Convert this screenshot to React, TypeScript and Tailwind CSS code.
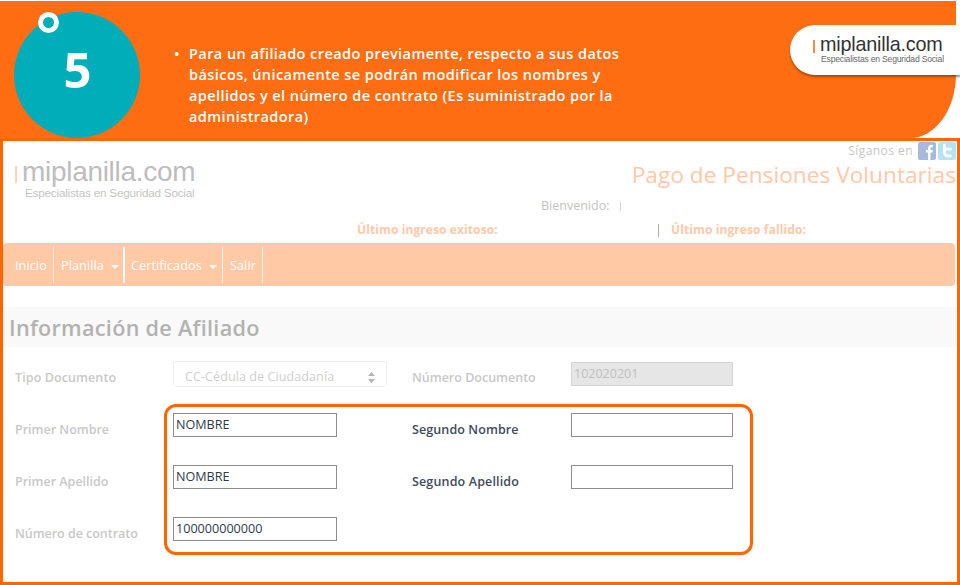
import React from "react";

function Logo({ big, faded }: { big: string; faded?: boolean }) {
  return (
    <div className="flex items-start gap-[5px]">
      <span className={faded ? "mt-[9px] block h-[17px] w-[2px] bg-[#fbd3bb]" : "mt-[11px] block h-[13px] w-[2px] bg-[#f08a4b]"} />
      <div className="flex flex-col">
        <span className={big}>miplanilla.com</span>
        <span
          className={
            faded
              ? "mt-[-1px] pl-[3px] text-[11.7px] leading-[13px] tracking-[-0.2px] text-[#c4c4c4]"
              : "mt-[-5px] pl-[1px] text-[8.6px] leading-[11px] tracking-[-0.2px] text-[#666666]"
          }
        >
          Especialistas en Seguridad Social
        </span>
      </div>
    </div>
  );
}

function Caret() {
  return <span className="ml-[7px] mt-[1px] block h-0 w-0 border-x-[4px] border-t-[4px] border-x-transparent border-t-white" />;
}

function Field({ value, narrow }: { value?: string; narrow?: boolean }) {
  return (
    <div
      className={
        narrow
          ? "flex h-[24px] w-[162px] items-center border border-[#8c8c8c] bg-white"
          : "flex h-[24px] w-[164px] items-center border border-[#8c8c8c] bg-white pl-[2px] text-[12.6px] font-normal tracking-normal text-[#2f3a4a]"
      }
    >
      {value}
    </div>
  );
}

function FacebookIcon() {
  return (
    <svg width="18" height="18" viewBox="0 0 18 18">
      <rect width="18" height="18" rx="2" className="fill-[#a7b9dc]" />
      <path d="M10 18v-7.5H7.8V8H10V6.2C10 4 11.3 2.8 13.3 2.8c.7 0 1.3.1 1.6.1v2.3h-1.2c-1 0-1.2.5-1.2 1.2V8h2.3l-.3 2.5h-2V18z" className="fill-white" />
    </svg>
  );
}

function TwitterIcon() {
  return (
    <svg width="18" height="18" viewBox="0 0 18 18">
      <rect width="18" height="18" rx="2" className="fill-[#b5e3f5]" />
      <path d="M5 3.2c0-.8.6-1.4 1.4-1.4s1.5.6 1.5 1.4v2.6h4.6c.8 0 1.4.6 1.4 1.4s-.6 1.4-1.4 1.4H7.9v1.8c0 1.2.8 2 2 2h2.6c.8 0 1.4.6 1.4 1.4s-.6 1.4-1.4 1.4H9.6C6.9 15.2 5 13.3 5 10.7z" className="fill-white" />
    </svg>
  );
}

export default function App() {
  return (
    <div className="relative flex h-[585px] w-[960px] flex-col overflow-hidden bg-white pt-px font-['Open_Sans',sans-serif]">
      <header className="relative h-[137px] w-[956px] shrink-0 rounded-br-[46px_64px] bg-[#ff6d12]">
        <div className="absolute left-[14px] top-[11px] flex h-[126px] w-[126px] items-center justify-center rounded-full bg-[#00adb9] pb-[12px] pl-[1px]">
          <span className="text-[49px] font-bold leading-none text-white">5</span>
        </div>
        <div className="absolute left-[38px] top-[11px] h-[21px] w-[21px] rounded-full border-[5px] border-white bg-[#00adb9]" />
        <ul className="absolute left-[174px] top-[42px] text-[14.5px] font-semibold leading-[21px] tracking-[0.43px] text-white">
          <li className="flex">
            <span className="w-[15px]">•</span>
            <span className="whitespace-nowrap">
              Para un afiliado creado previamente, respecto a sus datos
              <br />
              básicos, únicamente se podrán modificar los nombres y
              <br />
              apellidos y el número de contrato (Es suministrado por la
              <br />
              administradora)
            </span>
          </li>
        </ul>
        <div className="absolute left-[790px] top-[24px] h-[50px] w-[170px] rounded-l-[25px] bg-white pl-[23px] pt-[4px] font-['Liberation_Sans',sans-serif] shadow-[0_2px_2px_rgba(110,50,10,0.6)]">
          <Logo big="text-[19.8px] leading-[30px] tracking-[-0.2px] text-[#333333]" />
        </div>
      </header>

      <main className="flex min-h-0 flex-1 flex-col border-[3px] border-[#ff6600] bg-white">
        <div className="relative h-[102px] shrink-0">
          <div className="absolute right-[1px] top-px flex items-center gap-[2px] text-[12px] tracking-[0.45px] text-[#c6c6c6]">
            <span className="mr-[3px]">Síganos en</span>
            <FacebookIcon />
            <TwitterIcon />
          </div>
          <div className="absolute left-[12px] top-[16px] font-['Liberation_Sans',sans-serif]">
            <Logo faded big="text-[28px] leading-[30px] tracking-[-0.3px] text-[#bdbdbd]" />
          </div>
          <div className="absolute right-px top-[21px] whitespace-nowrap text-[22.7px] font-medium leading-[26px] text-[#ffc8a8]">
            Pago de Pensiones Voluntarias
          </div>
          <div className="absolute left-[538px] top-[56px] flex items-center text-[12.5px] text-[#c2c2c2]">
            Bienvenido:
            <span className="ml-[11px] block h-[9px] w-px bg-[#d8d8d8]" />
          </div>
          <div className="absolute left-[354px] top-[80px] flex items-center whitespace-nowrap text-[12px] font-bold tracking-[0.1px] text-[#ffc8a8]">
            <span className="w-[301px]">Último ingreso exitoso:</span>
            <span className="mr-[12px] block h-[13px] w-px bg-[#b9a89c]" />
            <span>Último ingreso fallido:</span>
          </div>
        </div>

        <nav className="flex h-[43px] w-[952px] shrink-0 items-center rounded-[4px] bg-[#ffc9a6] pl-[12px] text-[12.6px] tracking-[0.1px] text-white">
          <span className="flex h-[36px] w-[39px] items-center border-r border-[#fff2e8] pt-[4px]">Inicio</span>
          <span className="flex h-[36px] w-[71px] items-center border-r-2 border-white pl-[7px] pt-[4px]">
            Planilla
            <Caret />
          </span>
          <span className="flex h-[36px] w-[98px] items-center border-r border-[#fff2e8] pl-[6px] pt-[4px]">
            Certificados
            <Caret />
          </span>
          <span className="flex h-[36px] w-[40px] items-center border-r border-[#fff2e8] pl-[7px] pt-[4px]">Salir</span>
        </nav>

        <div className="mt-[21px] flex h-[40px] shrink-0 items-center bg-[#f8f9f8] pl-[6px] pt-[2px] text-[21.6px] font-semibold tracking-[0.3px] text-[#b2b2b2]">
          Información de Afiliado
        </div>

        <form className="relative mt-[14px] text-[12.5px] font-semibold">
          <div className="flex h-[26px] items-center pl-[12px]">
            <span className="w-[158px] pt-[9px] tracking-[0.1px] text-[#c8c8c8]">Tipo Documento</span>
            <div className="flex h-[26px] w-[214px] items-center justify-between rounded-[3px] border border-[#efefef] pl-[11px] pr-[11px] pt-[6px] font-normal tracking-[0.1px] text-[#cfcfcf]">
              CC-Cédula de Ciudadanía
              <svg width="7" height="11" viewBox="0 0 7 11" className="fill-[#b5b5b5]">
                <path d="M3.5 0 7 4H0zM3.5 11 0 7h7z" />
              </svg>
            </div>
            <span className="ml-[25px] w-[159px] pt-[9px] text-[#c8c8c8]">Número Documento</span>
            <div className="flex h-[24px] w-[162px] items-center border border-[#d4d4d4] bg-[#e6e6e6] pl-[2px] pt-px font-normal text-[#c0c0c0]">
              102020201
            </div>
          </div>

          <div className="ml-[161px] mt-[17px] h-[151px] w-[589px] rounded-[12px] border-[3px] border-[#ff6600]" />

          <div className="absolute left-[12px] right-0 top-[52px] flex flex-col gap-[28px]">
            <div className="flex h-[24px] items-center">
              <span className="w-[158px] pt-[11px] text-[#c8c8c8]">Primer Nombre</span>
              <Field value="NOMBRE" />
              <span className="ml-[75px] w-[159px] pt-[11px] tracking-[0.1px] text-[#3f4a5a]">Segundo Nombre</span>
              <Field narrow />
            </div>
            <div className="flex h-[24px] items-center">
              <span className="w-[158px] pt-[11px] text-[#c8c8c8]">Primer Apellido</span>
              <Field value="NOMBRE" />
              <span className="ml-[75px] w-[159px] pt-[11px] tracking-[0.15px] text-[#3f4a5a]">Segundo Apellido</span>
              <Field narrow />
            </div>
            <div className="flex h-[24px] items-center">
              <span className="w-[158px] pt-[11px] tracking-[-0.03px] text-[#c8c8c8]">Número de contrato</span>
              <Field value="100000000000" />
            </div>
          </div>
        </form>
      </main>
    </div>
  );
}
